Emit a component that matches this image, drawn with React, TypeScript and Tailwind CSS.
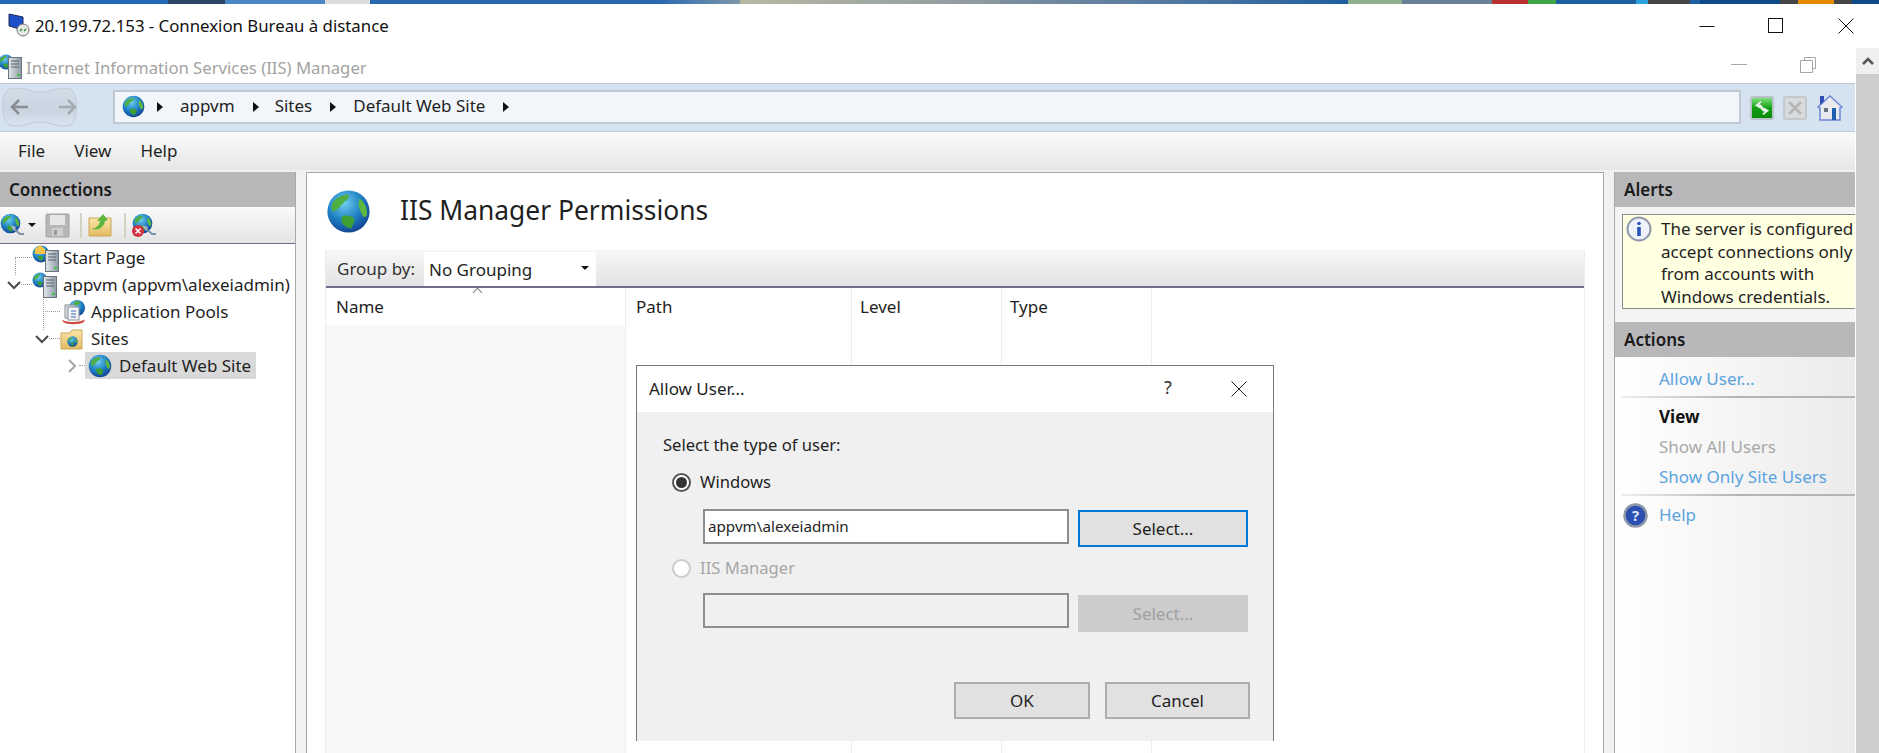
import type { ReactNode } from 'react'

const FONT = "font-['Noto_Sans',sans-serif]"

const desktopStrip = [
  ['w-[168px]', 'bg-[#2468b8]'],
  ['w-[57px]', 'bg-[#2b4468]'],
  ['w-[100px]', 'bg-[#4a87c4]'],
  ['w-[45px]', 'bg-[#dcdcdc]'],
  ['w-[290px]', 'bg-[#2a68b0]'],
  ['w-[80px]', 'bg-gradient-to-r from-[#2a68b0] to-[#7c97a8]'],
  ['w-[260px]', 'bg-gradient-to-r from-[#b9b9a3] to-[#8a98a0]'],
  ['w-[348px]', 'bg-gradient-to-r from-[#7d8f9f] to-[#1d5f9f]'],
  ['w-[54px]', 'bg-[#8fb08c]'],
  ['w-[90px]', 'bg-[#6a8096]'],
  ['w-[36px]', 'bg-[#b83232]'],
  ['w-[28px]', 'bg-[#3fa648]'],
  ['w-[80px]', 'bg-[#1d5f9f]'],
  ['w-[12px]', 'bg-[#2aa0dc]'],
  ['w-[42px]', 'bg-[#444444]'],
  ['w-[10px]', 'bg-[#1d5f9f]'],
  ['w-[80px]', 'bg-[#0f4a8a]'],
  ['w-[18px]', 'bg-[#444444]'],
  ['w-[36px]', 'bg-[#e58a00]'],
  ['w-[18px]', 'bg-[#444444]'],
  ['flex-1', 'bg-[#0f4a8a]'],
]

function GradientDefs() {
  return (
    <svg className="absolute w-0 h-0">
      <defs>
        <radialGradient id="globeBlue" cx="40%" cy="30%" r="75%">
          <stop offset="0%" stopColor="#6fd0ee" />
          <stop offset="55%" stopColor="#1f7fc4" />
          <stop offset="100%" stopColor="#123f8f" />
        </radialGradient>
        <linearGradient id="folderFill" x1="0" y1="0" x2="0" y2="1">
          <stop offset="0%" stopColor="#fbe6a8" />
          <stop offset="100%" stopColor="#e2bb62" />
        </linearGradient>
        <linearGradient id="serverFill" x1="0" y1="0" x2="1" y2="0">
          <stop offset="0%" stopColor="#e4e8ec" />
          <stop offset="100%" stopColor="#8c98a4" />
        </linearGradient>
        <linearGradient id="greenBtn" x1="0" y1="0" x2="0" y2="1">
          <stop offset="0%" stopColor="#7fe07f" />
          <stop offset="50%" stopColor="#12a012" />
          <stop offset="100%" stopColor="#0a8a0a" />
        </linearGradient>
        <linearGradient id="navBlob" x1="0" y1="0" x2="0" y2="1">
          <stop offset="0%" stopColor="#d3dde8" />
          <stop offset="60%" stopColor="#c9d5e1" />
          <stop offset="100%" stopColor="#dbe5ef" />
        </linearGradient>
      </defs>
    </svg>
  )
}

function Globe({ size, className = '' }: { size: number; className?: string }) {
  return (
    <svg width={size} height={size} viewBox="0 0 32 32" className={`shrink-0 ${className}`}>
      <circle cx="16" cy="16" r="15" fill="url(#globeBlue)" />
      <path d="M6 8c3-3 7-4 10-4 1 2-1 4-3 5-1 2-3 2-3 4-2 1-3 3-5 3-2-2-1-6 1-8z" fill="#4fae3a" opacity=".95" />
      <path d="M11 20c3-2 7-1 9 1 1 2-1 4-2 7-3 0-6-2-7-5z" fill="#3d9f34" />
      <path d="M24 7c3 2 6 7 5 12-2 2-3 0-4-2-1-3-3-5-1-10z" fill="#5cb83e" />
    </svg>
  )
}

function Server({ className = '' }: { className?: string }) {
  return (
    <svg width="14" height="22" viewBox="0 0 14 22" className={className}>
      <rect x=".5" y=".5" width="13" height="21" fill="url(#serverFill)" stroke="#6b7580" />
      <path d="M3 4h8M3 7h8M3 10h8" stroke="#59636e" />
      <rect x="9" y="17" width="3" height="2" fill="#3fc13f" />
    </svg>
  )
}

function ServerGlobe() {
  return (
    <span className="relative w-[26px] h-[26px] shrink-0 block">
      <Globe size={16} className="absolute left-0 top-0" />
      <Server className="absolute left-[11px] top-[4px]" />
    </span>
  )
}

function StartPageIcon() {
  return (
    <span className="relative w-[26px] h-[26px] shrink-0 block">
      <Globe size={18} className="absolute left-0 top-0" />
      <svg width="10" height="9" viewBox="0 0 10 9" className="absolute left-[3px] top-0">
        <path d="M0 4l5-4 5 4v5H0z" fill="#f3c44b" />
      </svg>
      <Server className="absolute left-[13px] top-[5px]" />
    </span>
  )
}

function PoolsIcon() {
  return (
    <svg width="26" height="26" viewBox="0 0 26 26" className="shrink-0">
      <circle cx="17" cy="9" r="8" fill="url(#globeBlue)" />
      <path d="M14 3c2-1 5-1 6 0 0 2-3 4-6 3z" fill="#4fae3a" />
      <rect x="5" y="6" width="10" height="13" fill="#d8dde2" stroke="#8a8f96" />
      <rect x="8" y="8" width="11" height="13" fill="#f2f4f6" stroke="#8a8f96" />
      <path d="M11 12h5M11 15h5M11 18h5" stroke="#3d6fb5" />
      <path d="M2 20c1 4 20 4 23 0l-1 3c-4 3-17 3-21 0z" fill="#cf4a3c" />
    </svg>
  )
}

function SitesIcon() {
  return (
    <span className="relative w-[24px] h-[24px] shrink-0 block">
      <svg width="24" height="24" viewBox="0 0 24 24" className="absolute left-0 top-0">
        <path d="M1 6h9l2-3h10v19H1z" fill="url(#folderFill)" stroke="#c9a659" />
      </svg>
      <Globe size={11} className="absolute left-[7px] top-[9px]" />
    </span>
  )
}

function ConnectIcon({ error = false }: { error?: boolean }) {
  return (
    <span className="relative w-[25px] h-[25px] shrink-0 block">
      <Globe size={21} className="absolute left-0 top-0" />
      <svg width="25" height="25" viewBox="0 0 25 25" className="absolute left-0 top-0">
        <path d="M13 15l7 6h4" fill="none" stroke="#7d93a8" strokeWidth="2" />
        <path d="M10 12l6 2-2 4z" fill="#a9b6c2" />
      </svg>
      {error && (
        <svg width="12" height="12" viewBox="0 0 12 12" className="absolute left-0 top-[12px]">
          <circle cx="6" cy="6" r="6" fill="#cf3340" />
          <path d="M3.5 3.5l5 5M8.5 3.5l-5 5" stroke="#fff" strokeWidth="1.5" />
        </svg>
      )}
    </span>
  )
}

function SaveIcon() {
  return (
    <svg width="25" height="25" viewBox="0 0 25 25" className="shrink-0">
      <rect x="1" y="1" width="23" height="23" rx="1" fill="#b5b7b8" stroke="#a0a2a3" />
      <rect x="5" y="2" width="15" height="10" fill="#e6e6e6" />
      <rect x="7" y="15" width="11" height="8" fill="#cfcfcf" />
      <rect x="9" y="17" width="3" height="5" fill="#999999" />
    </svg>
  )
}

function UpFolderIcon() {
  return (
    <svg width="24" height="24" viewBox="0 0 24 24" className="shrink-0">
      <path d="M1 5h22v18H1z" fill="url(#folderFill)" stroke="#c9a659" />
      <path d="M4 16c4-1 7-3 8-8l-3 0 6-7 5 6-3 1c-1 6-6 10-13 8z" fill="#5cb83e" />
    </svg>
  )
}

function Chevron({ open, muted = false }: { open: boolean; muted?: boolean }) {
  return (
    <svg width="14" height="14" viewBox="0 0 14 14" className="shrink-0">
      <path
        d={open ? 'M1 4l6 6 6-6' : 'M4 1l6 6-6 6'}
        fill="none"
        stroke={muted ? '#a6a6a6' : '#4a4a4a'}
        strokeWidth="2"
      />
    </svg>
  )
}

function Crumb({ first = false }: { first?: boolean }) {
  return (
    <span className={`${first ? 'ml-[12px]' : 'ml-[18px]'} w-0 h-0 border-y-[5px] border-y-transparent border-l-[6px] border-l-[#111111] shrink-0`} />
  )
}

function TreeRow({ pad, children }: { pad: string; children: ReactNode }) {
  return <div className={`flex items-center h-[27px] ${pad}`}>{children}</div>
}

function Dots({ w }: { w: string }) {
  return <span className={`${w} h-0 border-t border-dotted border-[#9a9a9a] shrink-0`} />
}

function PanelHeader({ children }: { children: ReactNode }) {
  return (
    <div className="h-[35px] shrink-0 bg-[#b8b8ba] flex items-center pl-[9px] text-[17px] font-semibold text-[#1a1a1a]">
      {children}
    </div>
  )
}

function Divider() {
  return <div className="h-[2px] mt-[2px] mb-[4px] ml-[6px] bg-gradient-to-r from-[#eeeeee] via-[#b4b4b4] to-[#b4b4b4]" />
}

function Connections() {
  return (
    <div className="w-[296px] shrink-0 bg-white border-r border-[#a9a9a9] mt-[2px] flex flex-col overflow-hidden">
      <PanelHeader>Connections</PanelHeader>
      <div className="h-[37px] shrink-0 border-b border-[#6f6d8a] bg-gradient-to-b from-[#fafafa] to-[#e4e4e4] flex items-center">
        <ConnectIcon />
        <span className="ml-[3px] w-0 h-0 border-x-[4px] border-x-transparent border-t-[4px] border-t-[#111111]" />
        <span className="ml-[9px]"><SaveIcon /></span>
        <span className="ml-[10px] w-[2px] h-[25px] bg-[#d2d2c0]" />
        <span className="ml-[6px]"><UpFolderIcon /></span>
        <span className="ml-[12px] w-[2px] h-[25px] bg-[#d2d2c0]" />
        <span className="ml-[6px]"><ConnectIcon error /></span>
      </div>
      <div className="relative text-[17px] text-[#1f1f1f]">
        <div className="absolute left-[15px] top-[14px] h-[17px] border-l border-dotted border-[#9a9a9a]" />
        <div className="absolute left-[43px] top-[52px] h-[34px] border-l border-dotted border-[#9a9a9a]" />
        <TreeRow pad="pl-[15px]">
          <Dots w="w-[17px]" />
          <StartPageIcon />
          <span className="ml-[5px] whitespace-nowrap">Start Page</span>
        </TreeRow>
        <TreeRow pad="pl-[7px]">
          <Chevron open />
          <Dots w="w-[11px]" />
          <ServerGlobe />
          <span className="ml-[5px] whitespace-nowrap">appvm (appvm\alexeiadmin)</span>
        </TreeRow>
        <TreeRow pad="pl-[43px]">
          <Dots w="w-[17px]" />
          <PoolsIcon />
          <span className="ml-[5px] whitespace-nowrap">Application Pools</span>
        </TreeRow>
        <TreeRow pad="pl-[35px]">
          <Chevron open />
          <Dots w="w-[11px]" />
          <SitesIcon />
          <span className="ml-[7px] whitespace-nowrap">Sites</span>
        </TreeRow>
        <TreeRow pad="pl-[65px]">
          <Chevron open={false} muted />
          <Dots w="w-[6px]" />
          <span className="h-[27px] w-[171px] bg-[#d9d9d9] flex items-center">
            <Globe size={24} className="ml-[3px]" />
            <span className="ml-[7px] whitespace-nowrap">Default Web Site</span>
          </span>
        </TreeRow>
      </div>
    </div>
  )
}

function Permissions() {
  const colLine = 'border-r border-[#ececec]'
  return (
    <div className="flex-1 bg-white mt-[2px] ml-[10px] mr-[10px] border-l border-t border-r border-[#a9a9a9] flex flex-col px-[18px] overflow-hidden">
      <div className="h-[77px] shrink-0 flex items-center pl-[1px]">
        <Globe size={45} />
        <span className="ml-[29px] text-[26.4px] text-[#1f1f1f] -mt-[1px] whitespace-nowrap">IIS Manager Permissions</span>
      </div>
      <div className="flex-1 flex flex-col border-x border-[#ececec]">
        <div className="h-[38px] shrink-0 bg-gradient-to-b from-[#f7f7f7] to-[#e3e3e3] border-b-2 border-[#6f6d8a] flex items-stretch">
          <span className="w-[98px] pl-[11px] pt-[2px] flex items-center text-[17px] text-[#333333]">Group by:</span>
          <span className="w-[172px] mt-[2px] pt-[1px] bg-white flex items-center pl-[5px] text-[17px] text-[#1f1f1f] relative">
            No Grouping
            <span className="absolute right-[7px] top-[14px] w-0 h-0 border-x-[4px] border-x-transparent border-t-[4px] border-t-[#111111]" />
          </span>
        </div>
        <div className="flex-1 flex text-[17px] text-[#1f1f1f] relative">
          <span className="absolute left-[148px] top-[1px] w-[7px] h-[7px] rotate-45 border-l border-t border-[#808080]" />
          <div className={`w-[300px] ${colLine} flex flex-col`}>
            <div className="h-[37px] bg-white pl-[10px] flex items-center">Name</div>
            <div className="flex-1 bg-[#f7f7f7]" />
          </div>
          <div className={`w-[226px] ${colLine} h-full pl-[10px] pt-[6px]`}>Path</div>
          <div className={`w-[150px] ${colLine} h-full pl-[8px] pt-[6px]`}>Level</div>
          <div className={`w-[150px] ${colLine} h-full pl-[8px] pt-[6px]`}>Type</div>
        </div>
      </div>
    </div>
  )
}

function ActionLink({ children, muted = false }: { children: ReactNode; muted?: boolean }) {
  return (
    <div className={`h-[30px] pl-[44px] flex items-center whitespace-nowrap ${muted ? 'text-[#a8a8a8]' : 'text-[#5ba3de]'}`}>
      {children}
    </div>
  )
}

function AlertsActions() {
  return (
    <div className="w-[241px] shrink-0 mt-[2px] bg-[#f4f4f4] border-l border-[#a9a9a9] flex flex-col overflow-hidden text-[17px]">
      <PanelHeader>Alerts</PanelHeader>
      <div className="h-[7px] shrink-0" />
      <div className="h-[95px] shrink-0 ml-[7px] -mr-[2px] border border-[#8a8a8a] bg-[#ffffe1] flex text-[#1f1f1f] overflow-hidden">
        <svg width="26" height="26" viewBox="0 0 26 26" className="shrink-0 ml-[3px] mt-[1px]">
          <circle cx="13" cy="13" r="11.5" fill="#eef2fb" stroke="#8f98a8" strokeWidth="2" />
          <circle cx="13" cy="7.5" r="1.8" fill="#2a55b8" />
          <rect x="11.2" y="11" width="3.6" height="9" fill="#2a55b8" />
        </svg>
        <div className="ml-[9px] pt-[3px] leading-[22.6px] whitespace-nowrap">
          The server is configured t<br />accept connections only<br />from accounts with<br />Windows credentials.
        </div>
      </div>
      <div className="h-[13px] shrink-0" />
      <PanelHeader>Actions</PanelHeader>
      <div className="flex-1 bg-gradient-to-r from-white to-[#ebebeb] pt-[7px]">
        <ActionLink>Allow User...</ActionLink>
        <Divider />
        <div className="h-[30px] pl-[44px] flex items-center font-bold text-[#111111]">View</div>
        <ActionLink muted>Show All Users</ActionLink>
        <ActionLink>Show Only Site Users</ActionLink>
        <Divider />
        <div className="flex items-center h-[30px] pl-[8px]">
          <svg width="25" height="25" viewBox="0 0 25 25" className="shrink-0">
            <circle cx="12.5" cy="12.5" r="11" fill="#2a4fb0" stroke="#8f98a8" strokeWidth="2.5" />
            <text x="12.5" y="18" textAnchor="middle" fontSize="15" fontWeight="700" fill="#dfe6fa">?</text>
          </svg>
          <span className="ml-[11px] text-[#5ba3de]">Help</span>
        </div>
      </div>
    </div>
  )
}

function Radio({ checked, disabled = false }: { checked: boolean; disabled?: boolean }) {
  return (
    <span className={`w-[19px] h-[19px] rounded-full border-2 bg-white flex items-center justify-center shrink-0 ${disabled ? 'border-[#cccccc]' : 'border-[#555555]'}`}>
      {checked && <span className="w-[11px] h-[11px] rounded-full bg-[#333333]" />}
    </span>
  )
}

function AllowUserDialog() {
  const btn = 'h-[37px] border-2 flex items-center justify-center text-[17px]'
  return (
    <div className="absolute left-[636px] top-[365px] w-[638px] h-[376px] border-x border-t border-[#777777] bg-[#f0f0f0] flex flex-col text-[16.6px] text-[#1f1f1f]">
      <div className="h-[46px] shrink-0 bg-white flex items-center pl-[12px] relative text-[17px]">
        Allow User...
        <span className="absolute left-[527px] top-[8px] text-[18px] text-[#333333]">?</span>
        <svg width="16" height="16" viewBox="0 0 16 16" className="absolute left-[594px] top-[15px]">
          <path d="M.5.5l15 15M15.5.5l-15 15" stroke="#222222" />
        </svg>
      </div>
      <div className="pl-[26px] pt-[21px]">Select the type of user:</div>
      <div className="flex items-center pl-[35px] mt-[13px] h-[24px]">
        <Radio checked />
        <span className="ml-[9px]">Windows</span>
      </div>
      <div className="flex items-start pl-[66px] mt-[14px]">
        <div className="w-[366px] h-[35px] border-2 border-[#8e8e8e] bg-white flex items-center pl-[3px] text-[15.2px]">appvm\alexeiadmin</div>
        <div className={`${btn} w-[170px] ml-[9px] mt-[1px] bg-[#e1e1e1] border-[#0078d7]`}>Select...</div>
      </div>
      <div className="flex items-center pl-[35px] mt-[10px] h-[24px] text-[#a6a6a6]">
        <Radio checked={false} disabled />
        <span className="ml-[9px]">IIS Manager</span>
      </div>
      <div className="flex items-start pl-[66px] mt-[12px]">
        <div className="w-[366px] h-[35px] border-2 border-[#8e8e8e] bg-[#f0f0f0]" />
        <div className={`${btn} w-[170px] ml-[9px] mt-[2px] bg-[#cccccc] border-[#cccccc] text-[#a0a0a0]`}>Select...</div>
      </div>
      <div className="flex justify-end gap-[15px] pr-[23px] mt-[50px]">
        <div className={`${btn} w-[136px] bg-[#e1e1e1] border-[#adadad]`}>OK</div>
        <div className={`${btn} w-[145px] bg-[#e1e1e1] border-[#adadad]`}>Cancel</div>
      </div>
    </div>
  )
}

export default function App() {
  return (
    <div className={`${FONT} relative w-full h-[753px] overflow-hidden bg-white flex flex-col`}>
      <GradientDefs />
      <div className="h-[4px] shrink-0 flex">
        {desktopStrip.map(([w, bg], i) => (
          <span key={i} className={`${w} ${bg} h-full`} />
        ))}
      </div>
      <div className="h-[44px] shrink-0 flex items-center relative">
        <svg width="24" height="24" viewBox="0 0 24 24" className="ml-[7px] -mt-[2px]">
          <path d="M2 1l14 3v13L2 13z" fill="#1c50c8" stroke="#1a2a5a" />
          <circle cx="16" cy="17" r="6" fill="#e6e8e6" stroke="#777777" />
          <path d="M13 18l2-2M17 18l2-2" stroke="#2f8f3a" strokeWidth="1.5" />
        </svg>
        <span className="ml-[4px] text-[16.8px] text-[#111111] whitespace-nowrap">20.199.72.153 - Connexion Bureau à distance</span>
        <svg width="16" height="16" viewBox="0 0 16 16" className="absolute left-[1699px] top-[14px]">
          <path d="M.5 8.5h15" stroke="#111111" />
        </svg>
        <svg width="16" height="16" viewBox="0 0 16 16" className="absolute left-[1768px] top-[14px]">
          <rect x=".5" y=".5" width="14" height="14" fill="none" stroke="#111111" />
        </svg>
        <svg width="16" height="16" viewBox="0 0 16 16" className="absolute left-[1838px] top-[14px]">
          <path d="M.5.5l15 15M15.5.5l-15 15" stroke="#111111" />
        </svg>
      </div>
      <div className="flex-1 flex min-h-0">
        <div className="w-[1855px] shrink-0 flex flex-col min-h-0">
          <div className="h-[35px] shrink-0 flex items-center relative">
            <span className="relative w-[24px] h-[24px] block shrink-0 -ml-[2px]">
              <Globe size={16} className="absolute left-0 top-0" />
              <Server className="absolute left-[10px] top-[3px]" />
            </span>
            <span className="ml-[4px] mt-[4px] text-[16.7px] text-[#a3a3a3] whitespace-nowrap">Internet Information Services (IIS) Manager</span>
            <svg width="16" height="4" viewBox="0 0 16 4" className="absolute left-[1731px] top-[15px]">
              <path d="M0 1.5h16" stroke="#a6a6a6" />
            </svg>
            <svg width="16" height="16" viewBox="0 0 16 16" className="absolute left-[1800px] top-[9px]">
              <path d="M4.5 3V.5h11v11H13M.5 3.5h12v12H.5z" fill="none" stroke="#a6a6a6" />
            </svg>
          </div>
          <div className="h-[49px] shrink-0 bg-[#d5e2f0] border-y border-[#bcc8d4] flex items-center">
            <svg width="80" height="42" viewBox="0 0 80 42" className="shrink-0 -mt-[2px]">
              <path
                d="M10 3C22 0 30 6 40 6S60 0 70 3c9 3 9 32 0 36-10 3-20-3-30-3S22 42 10 39C0 35 0 6 10 3z"
                fill="url(#navBlob)"
                stroke="#c3ccd6"
              />
              <path d="M28 21H12M19 14l-7 7 7 7" fill="none" stroke="#8a8d91" strokeWidth="2.5" />
              <path d="M59 21h16M68 14l7 7-7 7" fill="none" stroke="#a5abb2" strokeWidth="2.5" />
            </svg>
            <div className="ml-[33px] mb-[2px] w-[1628px] h-[34px] bg-[#f2f6fa] border-2 border-[#c0c9d3] flex items-center text-[17px] text-[#222222]">
              <Globe size={23} className="ml-[7px]" />
              <Crumb first />
              <span className="ml-[17px] -mt-[1px]">appvm</span>
              <Crumb />
              <span className="ml-[16px] -mt-[1px]">Sites</span>
              <Crumb />
              <span className="ml-[17px] -mt-[1px] whitespace-nowrap">Default Web Site</span>
              <Crumb />
            </div>
            <div className="ml-[9px] w-[24px] h-[24px] border-2 border-[#b9c2c9] rounded-[3px] flex items-center justify-center">
              <svg width="22" height="22" viewBox="0 0 22 22">
                <rect width="22" height="22" fill="url(#greenBtn)" />
                <path d="M10 4L5 8l5 3M7 8c3 0 4 1 4 4" fill="none" stroke="#eef2ee" strokeWidth="2" />
                <path d="M12 18l5-4-5-3M15 14c-3 0-4-1-4-3" fill="none" stroke="#eef2ee" strokeWidth="2" />
              </svg>
            </div>
            <div className="ml-[9px] w-[24px] h-[24px] border-2 border-[#c4c9cd] rounded-[3px] bg-[#d9dadb] flex items-center justify-center">
              <svg width="14" height="14" viewBox="0 0 14 14">
                <path d="M1 1l12 12M13 1L1 13" stroke="#b3b5b7" strokeWidth="2.5" />
              </svg>
            </div>
            <svg width="26" height="26" viewBox="0 0 26 26" className="ml-[10px]">
              <path d="M1 12L13 1l12 11-2 1v12H3V13z" fill="#e8eaef" stroke="#6d86d8" strokeWidth="1.5" />
              <path d="M3 1h4v5l-4 4z" fill="#2f4fb8" />
              <rect x="7" y="13" width="4" height="4" fill="#68727e" />
              <rect x="15" y="13" width="4" height="12" fill="#1f5fb0" />
            </svg>
          </div>
          <div className="h-[38px] shrink-0 bg-gradient-to-b from-[#fbfbfb] to-[#e6e6e6] flex items-center gap-[29px] pl-[18px] text-[17px] text-[#1f1f1f]">
            <span>File</span>
            <span>View</span>
            <span>Help</span>
          </div>
          <div className="flex-1 flex min-h-0 bg-[#f1f1f1]">
            <Connections />
            <Permissions />
            <AlertsActions />
          </div>
        </div>
        <div className="w-[23px] ml-[1px] shrink-0 bg-[#cdcdcd] flex flex-col">
          <div className="h-[26px] bg-[#f0f0f0] flex items-center justify-center">
            <svg width="12" height="8" viewBox="0 0 12 8">
              <path d="M1 7l5-5 5 5" fill="none" stroke="#555555" strokeWidth="2.5" />
            </svg>
          </div>
        </div>
      </div>
      <AllowUserDialog />
    </div>
  )
}
